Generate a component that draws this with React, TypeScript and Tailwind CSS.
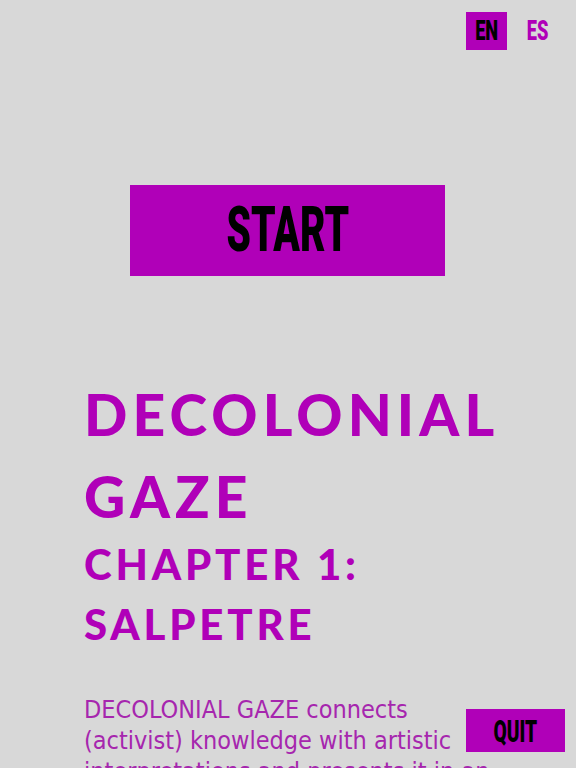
import React from 'react';

const head = { fontFamily: "Lato, 'DejaVu Sans', sans-serif" };
const cond = { fontFamily: "Roboto, 'Liberation Sans', sans-serif" };
const body = { fontFamily: "'Liberation Sans Narrow', 'DejaVu Sans Condensed', 'Roboto Condensed', sans-serif" };

const App: React.FC = () => (
  <div className="relative h-[768px] w-full overflow-hidden bg-[#d8d8d8]">
    <div className="flex justify-end gap-5 pr-[27px] pt-3">
      <button className="flex h-[38px] w-[41px] items-center justify-center bg-[#b000b8]">
        <span style={cond} className="inline-block scale-x-[0.65] text-[28px] font-black text-black">EN</span>
      </button>
      <button className="flex h-[38px] w-[22px] items-center justify-center">
        <span style={cond} className="inline-block scale-x-[0.65] text-[28px] font-black text-[#b000b8]">ES</span>
      </button>
    </div>

    <div className="mt-[135px] flex justify-center pr-[1px]">
      <button className="flex h-[91px] w-[315px] items-center justify-center bg-[#b000b8]">
        <span style={cond} className="inline-block scale-x-[0.62] text-[63px] font-black text-black">START</span>
      </button>
    </div>

    <div className="mt-[97px] px-[84px]">
      <h1 style={head} className="text-[57px] font-black uppercase leading-[82px] tracking-[0.09em] text-[#b000b8]">
        Decolonial<br />Gaze
      </h1>
      <h2 style={head} className="mt-[-3px] text-[42px] font-black uppercase leading-[60px] tracking-[0.09em] text-[#b000b8]">
        Chapter 1:<br />Salpetre
      </h2>
      <p style={body} className="mt-[40px] text-[25px] leading-[31px] text-[#a626ae]">
        DECOLONIAL GAZE connects (activist) knowledge with artistic interpretations and presents it in an accessible way.
      </p>
    </div>

    <button className="absolute bottom-[16px] right-[11px] flex h-[43px] w-[99px] items-center justify-center bg-[#b000b8]">
      <span style={cond} className="inline-block scale-x-[0.6] text-[32px] font-black text-black">QUIT</span>
    </button>
  </div>
);

export default App;
